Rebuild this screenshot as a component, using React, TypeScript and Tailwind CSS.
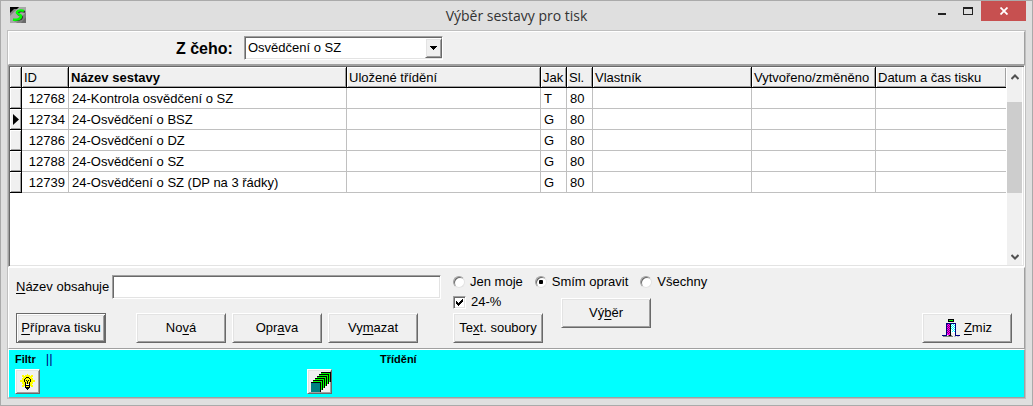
import { useState } from "react";
import type { ReactNode } from "react";

interface IReport {
  id: number;
  name: string;
  kind: string;
  cols: number;
}

const reports: IReport[] = [
  { id: 12768, name: "24-Kontrola osvědčení o SZ", kind: "T", cols: 80 },
  { id: 12734, name: "24-Osvědčení o BSZ", kind: "G", cols: 80 },
  { id: 12786, name: "24-Osvědčení o DZ", kind: "G", cols: 80 },
  { id: 12788, name: "24-Osvědčení o SZ", kind: "G", cols: 80 },
  { id: 12739, name: "24-Osvědčení o SZ (DP na 3 řádky)", kind: "G", cols: 80 },
];

const headers = [
  "ID",
  "Název sestavy",
  "Uložené třídění",
  "Jak",
  "Sl.",
  "Vlastník",
  "Vytvořeno/změněno",
  "Datum a čas tisku",
];

const raised =
  "border border-t-white border-l-white border-r-[#696969] border-b-[#696969] bg-[#f0f0f0] shadow-[inset_1px_1px_0_#e3e3e3,inset_-1px_-1px_0_#a0a0a0]";
const sunken =
  "border border-t-[#a0a0a0] border-l-[#a0a0a0] border-r-white border-b-white bg-white shadow-[inset_1px_1px_0_#696969,inset_-1px_-1px_0_#e3e3e3]";
const panel =
  "border border-t-white border-l-white border-r-[#a0a0a0] border-b-[#a0a0a0]";

const PushButton = ({
  children,
  isDefault = false,
  className = "",
}: {
  children: ReactNode;
  isDefault?: boolean;
  className?: string;
}) => (
  <button
    type="button"
    className={`flex h-[30px] w-[90px] shrink-0 items-center justify-center whitespace-nowrap ${
      isDefault
        ? "border border-[#696969] bg-[#f0f0f0] shadow-[inset_1px_1px_0_#fff,inset_-1px_-1px_0_#696969,inset_2px_2px_0_#e3e3e3,inset_-2px_-2px_0_#a0a0a0]"
        : raised
    } ${className}`}
  >
    {children}
  </button>
);

const Key = ({ children }: { children: ReactNode }) => (
  <span className="underline underline-offset-2">{children}</span>
);

const AppIcon = () => (
  <svg width="16" height="16" viewBox="0 0 16 16" aria-hidden="true">
    <rect width="16" height="16" fill="#808080" />
    <path d="M0 16V9L9 0h7v5L6 16z" fill="#a8a8a8" />
    <path d="M0 0h9L7 2H4L2 4 0 6z" fill="#000" />
    <path d="M11 16l5-6v6z" fill="#6a6a6a" />
    <path
      d="M15 5C13 4 9 4 8 6c-1 2.500 4.500 2 4 4.500C11.500 13 7 13.500 4 13"
      fill="none"
      stroke="#333"
      strokeWidth="2"
    />
    <path
      d="M14 4C12 3 8 3 7 5c-1 2.500 4.500 2 4 4.500C10.500 12.500 6 13 3 12.500"
      fill="none"
      stroke="#00ff00"
      strokeWidth="2.400"
    />
  </svg>
);

const BulbIcon = () => (
  <svg width="15" height="16" viewBox="0 0 15 16" shapeRendering="crispEdges" aria-hidden="true">
    <path
      d="M7 0h1v2H7zM2 1h2v2H2zM11 1h2v2h-2zM0 6h2v2H0zM13 6h2v2h-2zM2 11h2v2H2zM11 11h2v2h-2zM5 1h5v1h2v2h1v6h-1v2h-2v1H5v-1H3v-2H2V4h1V2h2z"
      fill="#ffff00"
    />
    <path
      d="M6 3h3v1H6zM5 4h1v1H5zM9 4h1v1H9zM4 5h1v3H4zM10 5h1v3h-1zM5 8h1v2H5zM9 8h1v2H9zM6 6h1v1H6zM8 6h1v1H8zM7 7h1v3H7z"
      fill="#000"
    />
    <path d="M6 10h3v2H6z" fill="#fff" />
    <path d="M5 10h1v4H5zM9 10h1v4H9zM6 11h3v1H6zM6 13h3v2H6zM7 15h1v1H7z" fill="#000" />
  </svg>
);

const SheetsIcon = () => (
  <svg width="20" height="20" viewBox="0 0 20 20" shapeRendering="crispEdges" aria-hidden="true">
    {[5, 4, 3, 2, 1].map((n) => (
      <g key={n}>
        <rect x={n * 2} y={10 - n * 2} width="10" height="10" fill="#000" />
        <rect x={n * 2} y={11 - n * 2} width="9" height="9" fill="#00ff00" />
      </g>
    ))}
    <rect y="10" width="10" height="10" fill="#000" />
    <rect y="11" width="9" height="9" fill="#008080" />
  </svg>
);

const DoorIcon = () => (
  <svg width="18" height="18" viewBox="0 0 18 18" shapeRendering="crispEdges" aria-hidden="true">
    <path d="M6 0h6v3H6z" fill="#000" />
    <path d="M7 1h4v1H7z" fill="#00ff00" />
    <path d="M1 17h10v1H1zM6 16h4v1H6z" fill="#808080" />
    <path d="M12 17h2v1h-2zM15 17h2v1h-2z" fill="#c0c0c0" />
    <path d="M4 4h10v12h4v1h-5V5H5v12H0v-1h4z" fill="#000080" />
    <path d="M5 5h3v11H5z" fill="#ff00ff" />
    <path
      d="M5 5h1v1H5zM7 5h1v1H7zM6 6h1v1H6zM5 7h1v1H5zM7 7h1v1H7zM6 8h1v1H6zM5 9h1v1H5zM7 9h1v1H7zM6 10h1v1H6zM5 11h1v1H5zM7 11h1v1H7zM6 12h1v1H6zM5 13h1v1H5zM7 13h1v1H7zM6 14h1v1H6z"
      fill="#800080"
    />
    <path d="M8 5h1v12H7v-1h1z" fill="#000" />
    <path d="M9 5h4v9H9z" fill="#fff" />
    <path
      d="M9 5h1v1H9zM11 5h1v1h-1zM10 6h1v1h-1zM12 6h1v1h-1zM9 7h1v1H9zM11 7h1v1h-1zM10 8h1v1h-1zM12 8h1v1h-1zM9 9h1v1H9zM11 9h1v1h-1zM10 10h1v1h-1zM12 10h1v1h-1zM11 11h1v1h-1zM10 12h1v1h-1zM12 12h1v1h-1z"
      fill="#00ffff"
    />
  </svg>
);

const TitleBar = () => (
  <header className="grid h-[29px] grid-cols-[1fr_auto_1fr] items-start">
    <div className="pt-[6px] pl-[9px]">
      <AppIcon />
    </div>
    <h1 className="pt-[5px] font-['Open_Sans',sans-serif] text-[14px] leading-[20px] text-[#333]">
      Výběr sestavy pro tisk
    </h1>
    <div className="flex justify-end pr-[6px]">
      <button type="button" aria-label="Minimalizovat" className="flex h-5 w-[26px] items-center justify-center">
        <svg width="9" height="9" viewBox="0 0 9 9" shapeRendering="crispEdges">
          <path d="M1 6h8v2H1z" fill="#222" />
        </svg>
      </button>
      <button type="button" aria-label="Maximalizovat" className="flex h-5 w-[27px] items-center justify-center">
        <svg width="10" height="9" viewBox="0 0 10 9" shapeRendering="crispEdges">
          <path d="M0 0h10v8H0zM1 2v5h8V2z" fillRule="evenodd" fill="#222" />
        </svg>
      </button>
      <button type="button" aria-label="Zavřít" className="flex h-5 w-[45px] items-center justify-center bg-[#c75050]">
        <svg width="8" height="8" viewBox="0 0 8 8">
          <path d="M.5 .5l7 7M7.500 .5l-7 7" stroke="#fff" strokeWidth="1.800" />
        </svg>
      </button>
    </div>
  </header>
);

const ReportTable = () => (
  <div className={`flex h-[202px] p-px pr-[2px] ${sunken}`}>
    <div className="min-w-0 flex-1">
      <table className="w-full table-fixed border-separate border-spacing-0 text-left leading-[15px]">
        <colgroup>
          <col className="w-[12px]" />
          <col className="w-[47px]" />
          <col className="w-[278px]" />
          <col className="w-[194px]" />
          <col className="w-[26px]" />
          <col className="w-[26px]" />
          <col className="w-[159px]" />
          <col className="w-[124px]" />
          <col />
        </colgroup>
        <thead>
          <tr className="h-[21px]">
            <td className="border-r border-b border-black bg-[#f0f0f0] p-0 shadow-[inset_1px_1px_0_#fff,inset_-1px_-1px_0_#a0a0a0]" />
            {headers.map((h) => (
              <th
                key={h}
                scope="col"
                className={`overflow-hidden border-r border-b border-black bg-[#f0f0f0] px-[2px] py-0 whitespace-nowrap shadow-[inset_1px_1px_0_#fff,inset_-1px_-1px_0_#a0a0a0] last:border-r-0 ${
                  h === "Název sestavy" ? "font-bold" : "font-normal"
                }`}
              >
                {h}
              </th>
            ))}
          </tr>
        </thead>
        <tbody>
          {reports.map((r) => (
            <tr key={r.id} className="h-[21px] *:border-r *:border-b *:border-[#c0c0c0] *:px-[3px] *:py-0 *:whitespace-nowrap">
              <td className="border-black! bg-[#f0f0f0] shadow-[inset_1px_1px_0_#fff,inset_-1px_-1px_0_#a0a0a0]">
                {r.id === 12734 && (
                  <svg width="6" height="11" viewBox="0 0 6 11" aria-hidden="true">
                    <path d="M0 0l6 5.500L0 11z" fill="#000" />
                  </svg>
                )}
              </td>
              <td className="text-right">{r.id}</td>
              <td>{r.name}</td>
              <td />
              <td>{r.kind}</td>
              <td>{r.cols}</td>
              <td />
              <td />
              <td className="border-r-0!" />
            </tr>
          ))}
        </tbody>
      </table>
    </div>
    <div className="ml-px flex w-[15px] flex-col bg-[#f0f0f0]">
      <button type="button" aria-label="Nahoru" className="flex h-[19px] items-center justify-center">
        <svg width="8" height="6" viewBox="0 0 8 6">
          <path d="M.5 5L4 1.500 7.500 5" fill="none" stroke="#505050" strokeWidth="2" />
        </svg>
      </button>
      <div className="mt-4 h-[91px] bg-[#cdcdcd]" />
      <button type="button" aria-label="Dolů" className="mt-auto flex h-[17px] items-center justify-center">
        <svg width="8" height="6" viewBox="0 0 8 6">
          <path d="M.5 1L4 4.500 7.500 1" fill="none" stroke="#505050" strokeWidth="2" />
        </svg>
      </button>
    </div>
  </div>
);

const owners = ["Jen moje", "Smím opravit", "Všechny"];

const radioStyle =
  "h-3 w-3 appearance-none rounded-full border border-t-[#a0a0a0] border-l-[#a0a0a0] border-r-[#e3e3e3] border-b-[#e3e3e3] bg-white shadow-[inset_1px_1px_0_#696969] checked:bg-[radial-gradient(circle,#000_2px,#fff_2.500px)]";

const ControlPanel = () => {
  const [owner, setOwner] = useState("Smím opravit");
  const [text, setText] = useState("");
  const [only24, setOnly24] = useState(true);

  return (
    <section className={`flex items-start pt-[7px] pr-3 pb-[5px] pl-[7px] ${panel}`}>
      <div className="flex w-[425px] shrink-0 flex-col gap-[14px]">
        <div className="flex items-center justify-between">
          <label htmlFor="name_filter" className="whitespace-nowrap">
            <Key>N</Key>ázev obsahuje
          </label>
          <input
            type="text"
            id="name_filter"
            value={text}
            onChange={(e) => setText(e.target.value)}
            className={`h-6 w-[329px] px-1 outline-none ${sunken}`}
          />
        </div>
        <div className="flex gap-[6px]">
          <PushButton isDefault className="mr-6">
            <span>
              <Key>P</Key>říprava tisku
            </span>
          </PushButton>
          <PushButton>
            <span>
              No<Key>v</Key>á
            </span>
          </PushButton>
          <PushButton>
            <span>
              Opr<Key>a</Key>va
            </span>
          </PushButton>
          <PushButton>
            <span>
              Vy<Key>m</Key>azat
            </span>
          </PushButton>
        </div>
      </div>

      <div className="ml-3 flex flex-col gap-[6px]">
        <div className="flex h-[14px] gap-3">
          {owners.map((o) => (
            <label key={o} className="flex items-center gap-[5px] whitespace-nowrap">
              <input
                type="radio"
                name="owner"
                checked={owner === o}
                onChange={() => setOwner(o)}
                className={radioStyle}
              />
              {o}
            </label>
          ))}
        </div>
        <div className="flex items-start gap-[18px]">
          <div className="flex flex-col gap-1">
            <label className="flex h-[14px] items-center gap-[5px]">
              <span className="relative flex">
                <input
                  type="checkbox"
                  checked={only24}
                  onChange={(e) => setOnly24(e.target.checked)}
                  className={`peer h-[13px] w-[13px] appearance-none ${sunken}`}
                />
                <svg
                  width="7"
                  height="7"
                  viewBox="0 0 7 7"
                  shapeRendering="crispEdges"
                  className="pointer-events-none absolute top-[3px] left-[3px] hidden peer-checked:block"
                >
                  <path d="M0 2h1v1h1v1h1V3h1V2h1V1h1V0h1v3H6v1H5v1H4v1H3v1H2V6H1V5H0z" fill="#000" />
                </svg>
              </span>
              24-%
            </label>
            <PushButton>
              <span>
                Te<Key>x</Key>t. soubory
              </span>
            </PushButton>
          </div>
          <PushButton className="mt-[3px]">
            <span>
              Vý<Key>b</Key>ěr
            </span>
          </PushButton>
        </div>
      </div>

      <PushButton className="ml-auto gap-1 self-end">
        <DoorIcon />
        <span>
          <Key>Z</Key>miz
        </span>
      </PushButton>
    </section>
  );
};

const FilterBar = () => (
  <footer className={`flex bg-[#00ffff] pt-[2px] pb-[3px] pl-[6px] text-[11px] leading-[15px] ${panel}`}>
    <div className="flex w-[292px] flex-col gap-[2px]">
      <div className="flex h-[15px] gap-[10px]">
        <span className="font-bold">Filtr</span>
        <span className="text-[13px] leading-[13px] text-[#000080]">||</span>
      </div>
      <button type="button" aria-label="Filtr" className={`flex h-[25px] w-[25px] items-center justify-center ${raised}`}>
        <BulbIcon />
      </button>
    </div>
    <div className="flex flex-col gap-[2px]">
      <span className="pl-[73px] font-bold">Třídění</span>
      <button type="button" aria-label="Třídění" className={`flex h-[25px] w-[25px] items-end justify-end pb-px ${raised}`}>
        <SheetsIcon />
      </button>
    </div>
  </footer>
);

const App = () => {
  const [source, setSource] = useState("Osvědčení o SZ");

  return (
    <div className="flex min-h-screen flex-col border border-[#aaaaaa] bg-[#dfdfdf] font-['Liberation_Sans',Arial,sans-serif] text-[13px] text-black">
      <TitleBar />
      <main className="mx-[6px] mb-[6px] border border-[#bfbfbf] bg-[#f0f0f0]">
        <section className={`flex h-[34px] items-start gap-[11px] pt-1 pl-[167px] ${panel}`}>
          <label htmlFor="source" className="text-[16px] leading-[26px] font-bold">
            Z čeho:
          </label>
          <div className="relative">
            <select
              id="source"
              value={source}
              onChange={(e) => setSource(e.target.value)}
              className={`block h-6 w-[199px] appearance-none pr-5 pl-[3px] outline-none ${sunken}`}
            >
              <option>Osvědčení o SZ</option>
            </select>
            <span
              className={`pointer-events-none absolute top-[2px] right-[1px] flex h-5 w-[17px] items-center justify-center ${raised}`}
            >
              <svg width="7" height="4" viewBox="0 0 7 4" shapeRendering="crispEdges">
                <path d="M0 0h7v1H6v1H5v1H4v1H3V3H2V2H1V1H0z" fill="#000" />
              </svg>
            </span>
          </div>
        </section>
        <ReportTable />
        <ControlPanel />
        <FilterBar />
      </main>
    </div>
  );
};

export default App;
